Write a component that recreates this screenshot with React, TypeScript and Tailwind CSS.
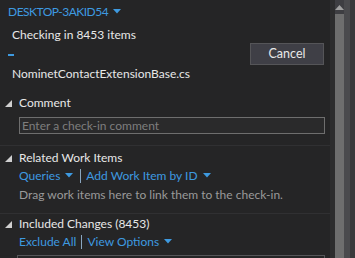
import React from 'react';

const font = { fontFamily: 'Lato, "Noto Sans", sans-serif' };

const Caret = () => (
  <svg width="8" height="5" viewBox="0 0 8 5" className="inline-block ml-[5px] mr-[2px] mb-[1px]">
    <polygon points="0,0 8,0 4,4.5" fill="#3e9ae0" />
  </svg>
);

const Expander = () => (
  <svg width="7" height="7" viewBox="0 0 7 7" className="mr-[7px]">
    <polygon points="7,0 7,7 0,7" fill="#d0d0d0" />
  </svg>
);

const Divider = () => <span className="mx-[5px] w-px h-[14px] bg-[#8aa6c0]" />;

const SectionHeader: React.FC<{ title: string }> = ({ title }) => (
  <div className="flex items-center pl-[5px] h-[18px] text-[12px] text-[#e8e8e8]">
    <Expander />
    <span>{title}</span>
  </div>
);

const App: React.FC = () => {
  return (
    <div className="w-[355px] h-[258px] bg-[#252526] flex overflow-hidden" style={font}>
      <div className="flex-1 min-w-0">
        {/* workspace picker */}
        <div className="h-[24px] flex items-center pl-[8px] text-[12px] tracking-[-0.5px] text-[#3e9ae0]">
          DESKTOP-3AKID54 <Caret />
        </div>

        {/* progress */}
        <div className="flex">
          <div className="flex-1 flex flex-col">
            <div className="h-[22px] flex items-center pl-[12px] text-[12px] text-[#e8e8e8]">
              Checking in 8453 items
            </div>
            <div className="h-[2px] w-[6px] bg-[#3e9ae0] ml-[8px] mt-[8px]" />
            <div className="h-[20px] flex items-center pl-[12px] mt-[8px] text-[12px] text-[#e8e8e8]">
              NominetContactExtensionBase.cs
            </div>
          </div>
          <button className="w-[74px] h-[22px] mt-[19px] mr-[6px] bg-[#3f3f46] border border-[#555558] text-[12.5px] text-[#e8e8e8]">
            Cancel
          </button>
        </div>

        {/* comment */}
        <div className="mt-[10px]">
          <SectionHeader title="Comment" />
          <div className="ml-[19px] mr-[5px] mt-[5px] h-[17px] border border-[#6e6e6e] bg-[#2a2a2b] flex items-center px-[2px] text-[12px] text-[#7e7e7e]">
            Enter a check-in comment
          </div>
        </div>

        <div className="mt-[11px] border-t border-[#303032]" />

        {/* related work items */}
        <div className="mt-[3px]">
          <SectionHeader title="Related Work Items" />
          <div className="flex items-center h-[17px] pl-[19px] text-[12px] text-[#3e9ae0]">
            <span>Queries</span>
            <Caret />
            <Divider />
            <span>Add Work Item by ID</span>
            <Caret />
          </div>
          <div className="h-[22px] flex items-center pl-[19px] text-[12px] text-[#9a9a9a]">
            Drag work items here to link them to the check-in.
          </div>
        </div>

        <div className="mt-[7px] border-t border-[#303032]" />

        {/* included changes */}
        <div className="mt-[1px]">
          <SectionHeader title="Included Changes (8453)" />
          <div className="flex items-center h-[17px] pl-[19px] text-[12px] text-[#3e9ae0]">
            <span>Exclude All</span>
            <Divider />
            <span>View Options</span>
            <Caret />
          </div>
          <div className="ml-[17px] mr-[5px] mt-[5px] h-[10px] border-t border-l border-r border-[#555558]" />
        </div>
      </div>

      {/* scrollbar */}
      <div className="w-[25px] flex shrink-0">
        <div className="w-[5px] bg-[#2d2d2e]" />
        <div className="w-[9px] bg-[#6e6e6e] flex flex-col">
          <div className="w-full h-[14px] bg-[#3e3e42] flex justify-center items-center">
            <svg width="9" height="5" viewBox="0 0 9 5">
              <polygon points="0,5 9,5 4.5,0" fill="#a0a0a0" />
            </svg>
          </div>
        </div>
        <div className="w-[6px] bg-[#4a4a4d]" />
        <div className="flex-1 bg-[#3a3a3c]" />
      </div>
    </div>
  );
};

export default App;
